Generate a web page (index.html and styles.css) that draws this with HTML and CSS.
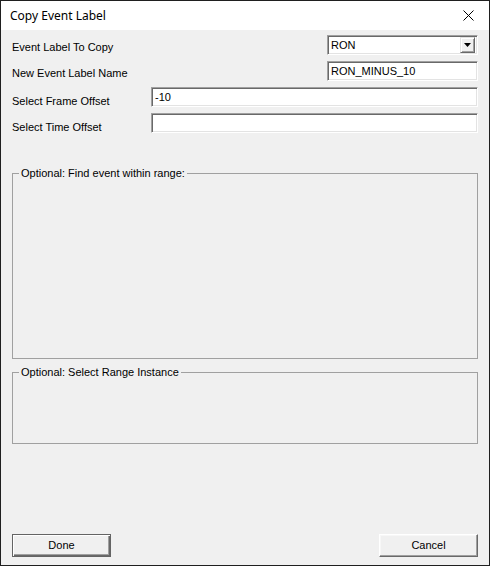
FILE: index.html
```html
<!DOCTYPE html>
<html lang="en">
<head>
    <meta charset="UTF-8">
    <title>Copy Event Label</title>
    <link rel="stylesheet" href="styles.css">
</head>
<body>
    <div class="window">
        <div class="titlebar">
            <span class="title">Copy Event Label</span>
            <svg class="close" width="11" height="11" viewBox="0 0 11 11">
                <path d="M0.5 0.5 L10.5 10.5 M10.5 0.5 L0.5 10.5" stroke="#000" stroke-width="1" fill="none"/>
            </svg>
        </div>

        <div class="content">
            <div class="fields">
                <div class="field">
                    <label class="field-label">Event Label To Copy</label>
                    <div class="combo">
                        <span class="combo-value">RON</span>
                        <span class="combo-btn">
                            <svg width="7" height="4" viewBox="0 0 7 4"><path d="M0 0 H7 L3.5 4 Z" fill="#000"/></svg>
                        </span>
                    </div>
                </div>
                <div class="field">
                    <label class="field-label" for="newName">New Event Label Name</label>
                    <input class="textbox textbox-short" type="text" id="newName" value="RON_MINUS_10">
                </div>
                <div class="field">
                    <label class="field-label field-label-wide" for="frameOffset">Select Frame Offset</label>
                    <input class="textbox" type="text" id="frameOffset" value="-10">
                </div>
                <div class="field">
                    <label class="field-label field-label-wide" for="timeOffset">Select Time Offset</label>
                    <input class="textbox" type="text" id="timeOffset" value="">
                </div>
            </div>

            <fieldset class="group group-range">
                <legend>Optional: Find event within range:</legend>
            </fieldset>

            <fieldset class="group group-instance">
                <legend>Optional: Select Range Instance</legend>
            </fieldset>

            <div class="buttons">
                <button class="btn btn-default">Done</button>
                <button class="btn">Cancel</button>
            </div>
        </div>
    </div>
</body>
</html>
```

FILE: styles.css
```css
body {
    margin: 0;
    padding: 0;
    font-family: "Liberation Sans", Arial, sans-serif;
    font-size: 11px;
    color: #000;
}

.window {
    width: 490px;
    height: 566px;
    box-sizing: border-box;
    border: 1px solid #1f1f1f;
    background-color: #f0f0f0;
    display: flex;
    flex-direction: column;
}

.titlebar {
    height: 29px;
    background-color: #fff;
    display: flex;
    align-items: center;
    justify-content: space-between;
    padding: 0 15px 0 9px;
    flex-shrink: 0;
}

.title {
    font-family: "Noto Sans", "Open Sans", sans-serif;
    font-size: 12px;
    padding-bottom: 1px;
}

.close {
    margin-top: -1px;
}

.content {
    flex: 1;
    display: flex;
    flex-direction: column;
    padding: 5px 11px 8px 11px;
}

.fields {
    display: flex;
    flex-direction: column;
    gap: 6px;
}

.field {
    display: flex;
    align-items: center;
    height: 20px;
}

.field-label {
    flex: 1;
    padding-top: 3px;
}

.field-label-wide {
    flex: none;
    width: 139px;
    padding-top: 7px;
}

/* sunken 3d edit box, like the old win32 controls */
.textbox,
.combo {
    box-sizing: border-box;
    height: 20px;
    margin: 0;
    border: 1px solid;
    border-color: #a0a0a0 #fff #fff #a0a0a0;
    box-shadow: inset 1px 1px 0 #696969, inset -1px -1px 0 #e3e3e3;
    background-color: #fff;
    font-family: "Liberation Sans", Arial, sans-serif;
    font-size: 11px;
    color: #000;
    padding: 0 2px 0 3px;
    outline: none;
    flex: 1;
}

.textbox-short {
    flex: none;
    width: 151px;
}

.combo {
    flex: none;
    width: 151px;
    display: flex;
    align-items: center;
    justify-content: space-between;
    padding: 2px 2px 2px 3px;
}

.combo-value {
    padding-bottom: 1px;
}

.combo-btn {
    box-sizing: border-box;
    width: 15px;
    height: 16px;
    margin-top: -1px;
    background-color: #f0f0f0;
    border: 1px solid;
    border-color: #e3e3e3 #696969 #696969 #e3e3e3;
    box-shadow: inset 1px 1px 0 #fff, inset -1px -1px 0 #a0a0a0;
    display: flex;
    align-items: center;
    justify-content: center;
}

.group {
    margin: 0;
    padding: 0;
    border: 1px solid #a0a0a0;
    box-sizing: border-box;
}

.group legend {
    margin-left: 6px;
    padding: 0 2px;
    line-height: 13px;
}

.group-range {
    margin-top: 34px;
    height: 192px;
}

.group-instance {
    margin-top: 7px;
    height: 78px;
}

.buttons {
    margin-top: auto;
    display: flex;
    justify-content: space-between;
}

.btn {
    width: 99px;
    height: 23px;
    box-sizing: border-box;
    margin: 0;
    padding: 0 0 1px;
    font-family: "Liberation Sans", Arial, sans-serif;
    font-size: 11px;
    color: #000;
    background-color: #f0f0f0;
    border: 1px solid;
    border-color: #fff #696969 #696969 #fff;
    box-shadow: inset -1px -1px 0 #a0a0a0, inset 1px 1px 0 #f7f7f7;
}

.btn-default {
    border-color: #646464;
    box-shadow: inset 1px 1px 0 #fff, inset -1px -1px 0 #696969, inset -2px -2px 0 #a0a0a0;
}
```
